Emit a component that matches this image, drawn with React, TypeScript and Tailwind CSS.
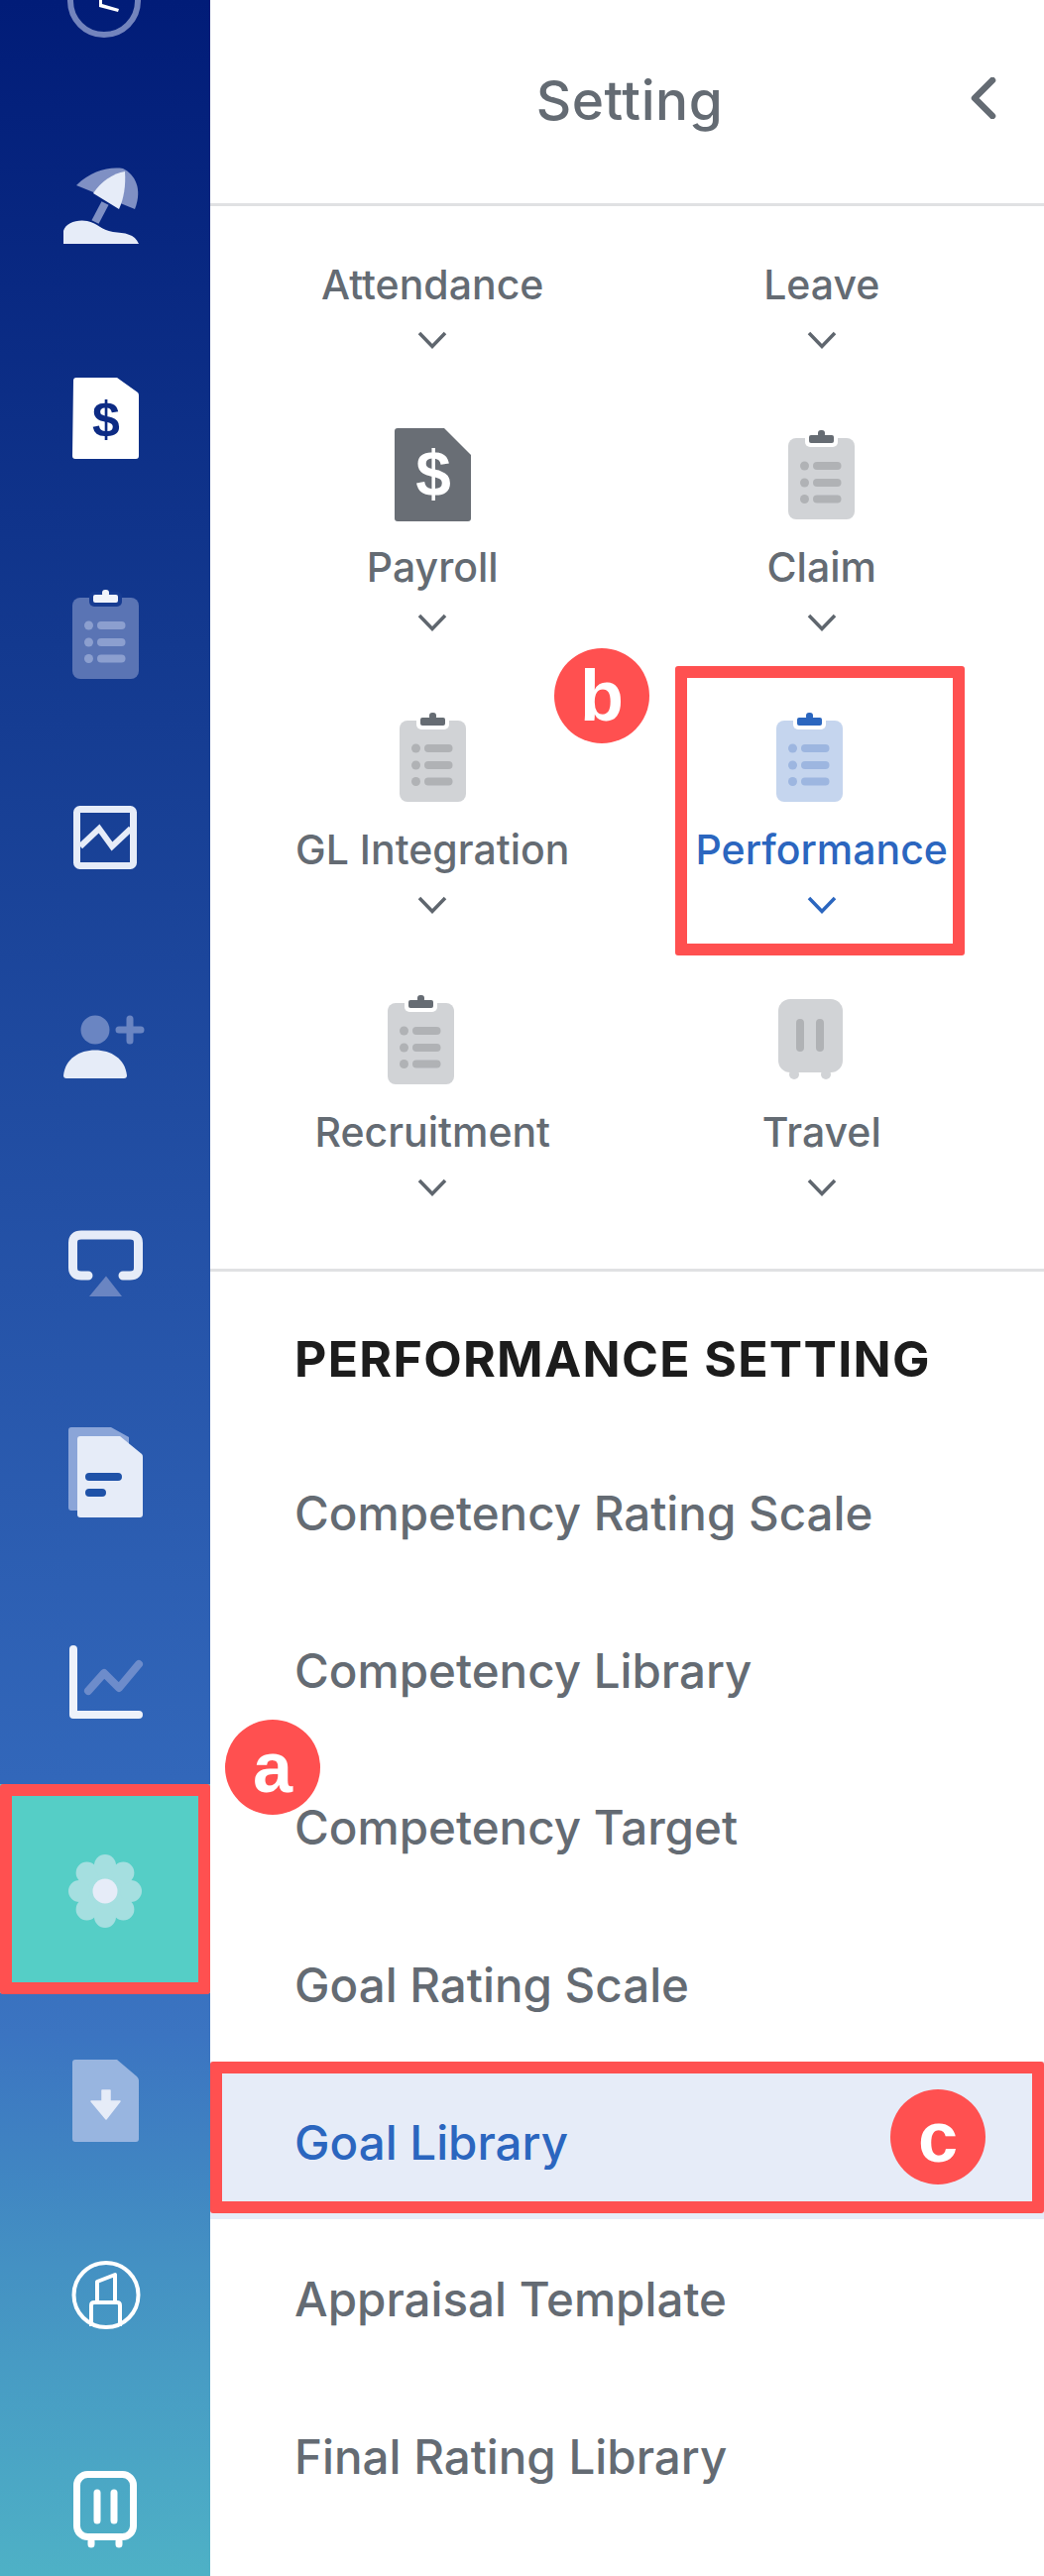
import type { ReactNode } from "react";

const FONT = "font-['Inter','Lato',sans-serif]";
const SOFT = "#e6ecf8";

function RailIcon({ children }: { children: ReactNode }) {
  return (
    <svg viewBox="-60 -60 120 120" className="w-[120px] h-[120px]">
      {children}
    </svg>
  );
}

function Clipboard({
  body,
  line,
  clip,
  halo,
  className = "",
}: {
  body: string;
  line: string;
  clip: string;
  halo: string;
  className?: string;
}) {
  return (
    <svg viewBox="0 0 67 90" className={`w-[67px] h-[90px] ${className}`}>
      <rect x="0" y="8" width="67" height="82" rx="8" fill={body} />
      <rect x="17" y="2" width="33" height="15" rx="5" fill={halo} />
      <rect x="21" y="5" width="25" height="8" rx="2" fill={clip} />
      <rect x="30" y="0" width="7" height="7" rx="3" fill={clip} />
      {[36, 53, 69.5].map((y) => (
        <g key={y} fill={line}>
          <circle cx="16.5" cy={y} r="4.5" />
          <rect x="25" y={y - 4} width="28.5" height="8" rx="4" />
        </g>
      ))}
    </svg>
  );
}

const railIcons: ReactNode[] = [
  <RailIcon key="clock">
    <circle cx="-1" cy="-6" r="34" fill="none" stroke="#7384bd" strokeWidth="6" />
    <path d="M-6 -9 L-3 -9 L-3 -3 L14 2 L13 5 L-6 0 Z" fill="#fff" />
  </RailIcon>,
  <RailIcon key="leave">
    <path d="M-29 -31 C-14 -46 4 -50 18 -48 C30 -42 38 -28 30 -7 Z" fill="#7f90c4" />
    <path d="M-12 -23 C-4 -35 8 -43 20 -45 C21 -31 19 -18 14 -7 Z" fill={SOFT} />
    <path d="M0 -13 L-10 6" stroke="#7f90c4" strokeWidth="8" />
    <path
      d="M-42 28 L-42 15 C-40 7 -28 3 -18 5 C-8 7 -4 14 8 16 C20 17 30 18 34 28 Z"
      fill={SOFT}
    />
  </RailIcon>,
  <RailIcon key="payroll">
    <path d="M-32 -45 Q-32 -48 -29 -48 L12 -48 L33 -33 Q34 -32 34 -30 L34 31 Q34 34 31 34 L-30 34 Q-33 34 -33 31 Z" fill="#fff" />
    <text
      x="1"
      y="11"
      textAnchor="middle"
      fontSize="50"
      fontWeight="700"
      fontFamily="'Liberation Sans',sans-serif"
      fill="#0d2b84"
    >
      $
    </text>
  </RailIcon>,
  <Clipboard
    key="claim"
    body="#5a74b4"
    line="#8c9fcf"
    clip="#f1f4fb"
    halo="#173c92"
  />,
  <RailIcon key="report">
    <rect x="-28.5" y="-34.5" width="57" height="57" rx="3" fill="none" stroke={SOFT} strokeWidth="7" />
    <path d="M-25 3 L-6 -15 L7 3 L26 -15" fill="none" stroke={SOFT} strokeWidth="6" />
  </RailIcon>,
  <RailIcon key="recruit">
    <ellipse cx="-10" cy="-23" rx="14.5" ry="14.5" fill="#6a85c2" />
    <path d="M14 -23 H36 M25 -34 V-12" stroke="#6a85c2" strokeWidth="7" strokeLinecap="round" />
    <path d="M-42 23 C-40 6 -26 -2.5 -10 -2.5 C6 -2.5 20 6 22 23 Q22 26 19 26 L-39 26 Q-42 26 -42 23 Z" fill={SOFT} />
  </RailIcon>,
  <RailIcon key="airplay">
    <path
      d="M-17 14 H-24 Q-32.5 14 -32.5 6 V-19 Q-32.5 -27 -24 -27 H25 Q33.5 -27 33.5 -19 V6 Q33.5 14 25 14 H18"
      fill="none"
      stroke={SOFT}
      strokeWidth="9"
      strokeLinecap="round"
    />
    <path d="M1 14.5 L17 35 H-16 Z" fill="#6a85c2" />
  </RailIcon>,
  <RailIcon key="docs">
    <path d="M-37 -41 Q-37 -44 -34 -44 L6 -44 L24 -34 L24 40 L-34 40 Q-37 40 -37 37 Z" fill="#8ba5d8" />
    <path d="M-28 -32 Q-28 -35 -25 -35 L15 -35 L37 -17 Q38 -16 38 -14 L38 44 Q38 47 35 47 L-25 47 Q-28 47 -28 44 Z" fill={SOFT} />
    <path d="M-16 6 H13 M-16 22 H-3" stroke="#1f52a8" strokeWidth="8" strokeLinecap="round" />
  </RailIcon>,
  <RailIcon key="analytics">
    <path d="M-17 11 L-1 -7 L14 8 L34 -16" fill="none" stroke="#6d8ccb" strokeWidth="8" strokeLinecap="round" strokeLinejoin="round" />
    <path d="M-32 -31 V35 H34" fill="none" stroke="#eef2fa" strokeWidth="8" strokeLinecap="round" strokeLinejoin="round" />
  </RailIcon>,
  <RailIcon key="setting">
    <g fill="#a5dfe0" transform="translate(0 2)">
      <circle r="23" />
      {[0, 45, 90, 135, 180, 225, 270, 315].map((a) => (
        <circle key={a} cx="26" r="11" transform={`rotate(${a})`} />
      ))}
      <circle r="12.5" fill={SOFT} />
    </g>
  </RailIcon>,
  <RailIcon key="download">
    <path d="M-33 -36 Q-33 -39 -30 -39 L12 -39 L32 -22 Q34 -20 34 -18 L34 41 Q34 44 31 44 L-30 44 Q-33 44 -33 41 Z" fill="#98b5e0" />
    <path d="M-3 -8 H5 V3 H15 L1 21 L-14 3 H-3 Z" fill={SOFT} stroke={SOFT} strokeWidth="1.5" strokeLinejoin="round" />
  </RailIcon>,
  <RailIcon key="lipstick">
    <g fill="none" stroke="#fff" strokeWidth="4" strokeLinejoin="round">
      <circle cx="1" cy="-12.5" r="32.5" />
      <path d="M-14 19 V-2 Q-14 -5 -11 -5 H12 Q15 -5 15 -2 V19" />
      <path d="M-8 -5 V-26 L10 -33 V-5" />
    </g>
  </RailIcon>,
  <RailIcon key="travel">
    <g fill="none" stroke="#fff" strokeWidth="7" strokeLinecap="round">
      <rect x="-28.5" y="-42.5" width="57" height="63" rx="11" />
      <path d="M-8 -24 V4 M9 -24 V4 M-14 25 V28 M14 25 V28" />
    </g>
  </RailIcon>,
];

const Chevron = ({ color = "#5f666e" }: { color?: string }) => (
  <svg viewBox="0 0 30 18" className="w-[30px] h-[18px]">
    <polyline points="2,2 15,15.5 28,2" fill="none" stroke={color} strokeWidth="3.5" />
  </svg>
);

function GreyClipboard({ active, className }: { active?: boolean; className?: string }) {
  return active ? (
    <Clipboard body="#c5d5ee" line="#9db6e0" clip="#2b66bf" halo="#fff" className={className} />
  ) : (
    <Clipboard body="#d1d3d6" line="#b0b2b5" clip="#666c73" halo="#fff" className={className} />
  );
}

function PayrollDoc() {
  return (
    <svg viewBox="0 0 77 94" className="w-[77px] h-[94px]">
      <path d="M0 3 Q0 0 3 0 L50 0 L77 27 L77 91 Q77 94 74 94 L3 94 Q0 94 0 91 Z" fill="#696e75" />
      <text
        x="39"
        y="68"
        textAnchor="middle"
        fontSize="64"
        fontWeight="700"
        fontFamily="'Liberation Sans',sans-serif"
        fill="#fff"
      >
        $
      </text>
    </svg>
  );
}

function TravelGrey() {
  return (
    <svg viewBox="0 0 65 82" className="w-[65px] h-[82px]">
      <circle cx="16" cy="76" r="5" fill="#d1d3d6" />
      <circle cx="48" cy="76" r="5" fill="#d1d3d6" />
      <rect width="65" height="74" rx="12" fill="#d1d3d6" />
      <path d="M22 24 V49 M42 24 V49" stroke="#b0b2b5" strokeWidth="8" strokeLinecap="round" />
    </svg>
  );
}

const modules: { label: string; icon?: ReactNode; active?: boolean }[] = [
  { label: "Attendance" },
  { label: "Leave" },
  { label: "Payroll", icon: <PayrollDoc /> },
  { label: "Claim", icon: <GreyClipboard /> },
  { label: "GL Integration", icon: <GreyClipboard /> },
  { label: "Performance", icon: <GreyClipboard active className="-translate-x-[12px]" />, active: true },
  { label: "Recruitment", icon: <GreyClipboard className="-translate-x-[12px]" /> },
  { label: "Travel", icon: <div className="-translate-x-[11px]"><TravelGrey /></div> },
];

const settings = [
  "Competency Rating Scale",
  "Competency Library",
  "Competency Target",
  "Goal Rating Scale",
  "Goal Library",
  "Appraisal Template",
  "Final Rating Library",
];

function Marker({ letter, className }: { letter: string; className: string }) {
  return (
    <div
      className={`absolute w-[96px] h-[96px] rounded-full bg-[#ff5050] flex items-center justify-center text-white text-[72px] leading-none font-bold font-['Liberation_Sans',sans-serif] ${className}`}
    >
      {letter}
    </div>
  );
}

export default function App() {
  return (
    <div className={`relative w-[1053px] h-[2599px] overflow-hidden bg-white flex ${FONT}`}>
      {/* Left rail */}
      <div className="w-[212px] shrink-0 overflow-hidden bg-[linear-gradient(180deg,#011c78_0%,#13398f_25%,#2553a8_50%,#3267ba_69%,#3b74c1_79%,#4491c3_88%,#4eb1c6_100%)]">
        <div className="-mt-[99px] flex flex-col">
          {railIcons.map((icon, i) => (
            <div
              key={i}
              className={`h-[211px] shrink-0 flex items-center justify-center ${
                i === 9 ? "bg-[#55cec6]" : ""
              }`}
            >
              {icon}
            </div>
          ))}
        </div>
      </div>

      {/* Setting panel */}
      <div className="flex-1 min-w-0 flex flex-col">
        <div className="relative h-[205px] flex items-center justify-center">
          <h1 className="text-[55px] leading-none font-medium text-[#646b73] tracking-[0.01em] -mt-[3px] ml-[5px]">
            Setting
          </h1>
          <svg viewBox="0 0 26 42" className="absolute left-[767px] top-[78px] w-[26px] h-[42px]">
            <polyline
              points="22,3 4,21 22,39"
              fill="none"
              stroke="#646b73"
              strokeWidth="6.5"
              strokeLinecap="round"
              strokeLinejoin="round"
            />
          </svg>
        </div>
        <div className="h-[3px] bg-[#e0e1e3]" />

        <div className="grid grid-cols-2 gap-y-[77px] px-[28px] pt-[53px] pb-[73px]">
          {modules.map((m) => (
            <div
              key={m.label}
              className={`flex flex-col items-center ${
                m.active ? "text-[#2b66bf]" : "text-[#646b73]"
              }`}
            >
              {m.icon && (
                <div className="h-[100px] mb-[17px] flex items-center justify-center">{m.icon}</div>
              )}
              <div className="h-[50px] leading-[52px] text-[41px] font-medium whitespace-nowrap">
                {m.label}
              </div>
              <div className="mt-[23px] h-[18px] flex">
                <Chevron color={m.active ? "#2b66bf" : "#5f666e"} />
              </div>
            </div>
          ))}
        </div>

        <div className="h-[3px] bg-[#e0e1e3]" />

        <h2 className="mt-[62px] mb-[51px] pl-[85px] h-[50px] leading-[52px] text-[50px] font-bold text-[#1c1c1c] tracking-[0.026em] whitespace-nowrap">
          PERFORMANCE SETTING
        </h2>

        <div className="flex flex-col">
          {settings.map((s) => (
            <div
              key={s}
              className={`h-[158.6px] shrink-0 flex items-center pl-[85px] pt-[3px] text-[47.5px] font-medium whitespace-nowrap ${
                s === "Goal Library" ? "bg-[#e6ecf8] text-[#2b66bf]" : "text-[#646b73]"
              }`}
            >
              {s}
            </div>
          ))}
        </div>
      </div>

      {/* Annotations */}
      <div className="absolute left-0 top-[1800px] w-[212px] h-[212px] border-[12px] border-[#ff5050] rounded-[3px]" />
      <div className="absolute left-[681px] top-[672px] w-[292px] h-[292px] border-[12px] border-[#ff5050] rounded-[3px]" />
      <div className="absolute left-[212px] top-[2080px] w-[841px] h-[153px] border-[12px] border-[#ff5050] rounded-[3px]" />
      <Marker letter="a" className="left-[227px] top-[1735px]" />
      <Marker letter="b" className="left-[559px] top-[654px]" />
      <Marker letter="c" className="left-[898px] top-[2108px]" />
    </div>
  );
}
